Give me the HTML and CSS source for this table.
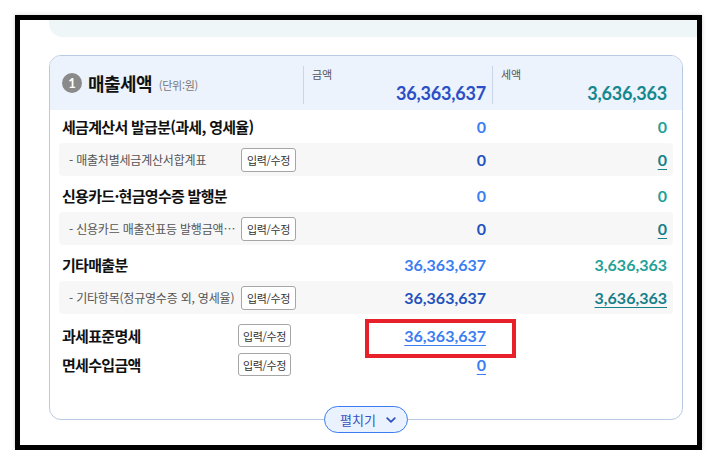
FILE: index.html
```html
<!DOCTYPE html>
<html lang="ko">
<head>
<meta charset="utf-8">
<title>매출세액</title>
<link rel="stylesheet" href="styles.css">
</head>
<body>
<div class="frame">
  <div class="strip"></div>
  <section class="card">
    <header class="card-head">
      <div class="head-title">
        <span class="num-badge">1</span>
        <h2 class="title">매출세액</h2>
        <span class="unit">(단위:원)</span>
      </div>
      <div class="head-col">
        <span class="head-label">금액</span>
        <span class="head-val amt">36,363,637</span>
      </div>
      <div class="head-col">
        <span class="head-label">세액</span>
        <span class="head-val tax">3,636,363</span>
      </div>
    </header>

    <div class="card-body">
      <div class="group first">
        <div class="row main">
          <div class="label">세금계산서 발급분(과세, 영세율)</div>
          <div class="val amt-main">0</div>
          <div class="val tax-main">0</div>
        </div>
        <div class="row sub">
          <div class="label"><span class="sub-text">- 매출처별세금계산서합계표</span><button class="btn">입력/수정</button></div>
          <div class="val amt-sub">0</div>
          <div class="val tax-sub"><a class="link">0</a></div>
        </div>
      </div>

      <div class="group">
        <div class="row main">
          <div class="label">신용카드·현금영수증 발행분</div>
          <div class="val amt-main">0</div>
          <div class="val tax-main">0</div>
        </div>
        <div class="row sub">
          <div class="label"><span class="sub-text">- 신용카드 매출전표등 발행금액…</span><button class="btn">입력/수정</button></div>
          <div class="val amt-sub">0</div>
          <div class="val tax-sub"><a class="link">0</a></div>
        </div>
      </div>

      <div class="group">
        <div class="row main">
          <div class="label">기타매출분</div>
          <div class="val amt-main">36,363,637</div>
          <div class="val tax-main">3,636,363</div>
        </div>
        <div class="row sub">
          <div class="label"><span class="sub-text">- 기타항목(정규영수증 외, 영세율)</span><button class="btn">입력/수정</button></div>
          <div class="val amt-sub">36,363,637</div>
          <div class="val tax-sub"><a class="link">3,636,363</a></div>
        </div>
      </div>

      <div class="row plain first-plain">
        <div class="label"><span class="plain-text">과세표준명세</span><button class="btn small">입력/수정</button></div>
        <div class="val amt-main hl"><a class="link">36,363,637</a><span class="redbox"></span></div>
        <div class="val"></div>
      </div>
      <div class="row plain">
        <div class="label"><span class="plain-text">면세수입금액</span><button class="btn small">입력/수정</button></div>
        <div class="val amt-main"><a class="link">0</a></div>
        <div class="val"></div>
      </div>
    </div>

    <button class="expand">펼치기
      <svg class="chev" width="10" height="6" viewBox="0 0 10 6"><path d="M1.2 1.2 L5 4.8 L8.8 1.2" fill="none" stroke="currentColor" stroke-width="1.8" stroke-linecap="round" stroke-linejoin="round"/></svg>
    </button>
  </section>
</div>
</body>
</html>
```

FILE: styles.css
```css
* { box-sizing: border-box; }

html, body {
  margin: 0;
  padding: 0;
  background: #ffffff;
}

body {
  font-family: "Noto Sans CJK KR", "Noto Sans", sans-serif;
  color: #111;
}

.frame {
  width: 687px;
  height: 435px;
  margin: 15px 0 0 15px;
  border: 5px solid #000;
  background: #fff;
  overflow: hidden;
  box-shadow: 0 0 4px rgba(0, 0, 0, 0.18);
}

.strip {
  height: 17px;
  margin-left: 29px;
  background: #eef6f8;
  border-bottom-left-radius: 14px;
}

.card {
  position: relative;
  margin: 18px 14px 0 29px;
  border: 1px solid #b9c9e2;
  border-radius: 12px;
  background: #fff;
}

.card-head {
  display: grid;
  grid-template-columns: 244px 189px 181px;
  padding: 10px 9px 6px 9px;
  background: #ecf3fd;
  border-radius: 11px 11px 0 0;
}

.head-title {
  display: flex;
  align-items: center;
  padding-left: 3px;
  padding-bottom: 4px;
}

.num-badge {
  width: 20px;
  height: 20px;
  border-radius: 50%;
  background: #8a8a8a;
  color: #fff;
  font-family: "Lato", "Noto Sans", sans-serif;
  font-weight: 700;
  font-size: 13px;
  line-height: 20px;
  text-align: center;
}

.title {
  margin: 0 0 0 6px;
  font-size: 18px;
  font-weight: 700;
  letter-spacing: -0.6px;
  line-height: 24px;
  color: #111;
}

.unit {
  margin-left: 7px;
  margin-top: 3px;
  font-size: 11px;
  color: #777;
  letter-spacing: -0.3px;
}

.head-col {
  display: flex;
  flex-direction: column;
  border-left: 1px solid #c9d5e8;
  padding: 0 6px 0 8px;
  height: 38px;
}

.head-label {
  font-size: 11px;
  line-height: 16px;
  color: #555;
}

.head-val {
  text-align: right;
  font-family: "Lato", "Noto Sans", sans-serif;
  font-weight: 700;
  font-size: 18px;
  line-height: 22px;
  letter-spacing: -0.2px;
}

.head-val.amt { color: #2a4fc6; }
.head-val.tax { color: #14878f; }

.card-body {
  padding: 0 9px 40px 9px;
}

.row {
  display: grid;
  grid-template-columns: 244px 189px 181px;
  align-items: center;
}

.row.main {
  height: 36px;
  padding-top: 2px;
}

.group.first .row.main {
  height: 33px;
  padding-top: 0;
}

.row.sub {
  height: 33px;
  background: #f7f7f7;
  border-radius: 4px;
}

.row.plain { height: 29px; }
.row.first-plain { margin-top: 7px; }

.label {
  display: flex;
  align-items: center;
  min-width: 0;
}

.row.main .label {
  padding-left: 3px;
  font-size: 15px;
  font-weight: 700;
  letter-spacing: -0.7px;
  color: #111;
  white-space: nowrap;
}

.row.sub .label { padding-left: 10px; }

.sub-text {
  width: 168px;
  margin-right: 4px;
  font-size: 12px;
  color: #555;
  letter-spacing: -0.2px;
  white-space: nowrap;
}

.row.plain .label { padding-left: 3px; }

.plain-text {
  width: 176px;
  font-size: 15px;
  font-weight: 700;
  letter-spacing: -0.7px;
  color: #111;
}

.btn {
  height: 24px;
  width: 55px;
  padding: 0;
  border: 1px solid #a6a6a6;
  border-radius: 3px;
  background: #fff;
  font-family: "Noto Sans CJK KR", sans-serif;
  font-size: 11px;
  color: #333;
  letter-spacing: -0.4px;
}

.btn.small {
  width: 53px;
  height: 23px;
}

.val {
  position: relative;
  text-align: right;
  padding-right: 6px;
  font-family: "Lato", "Noto Sans", sans-serif;
  font-weight: 700;
  font-size: 16px;
}

.amt-main { color: #3b7df3; }
.tax-main { color: #1fa197; }
.amt-sub { color: #2351bd; }
.tax-sub { color: #16808a; }

.link {
  color: inherit;
  text-decoration: underline;
  text-underline-offset: 3px;
  text-decoration-thickness: 1px;
}

.redbox {
  position: absolute;
  left: 62px;
  top: -7px;
  width: 151px;
  height: 39px;
  border: 4px solid #e8202a;
}

.expand {
  position: absolute;
  left: 50%;
  bottom: -14px;
  transform: translateX(-50%);
  width: 84px;
  height: 27px;
  display: flex;
  align-items: center;
  justify-content: center;
  gap: 10px;
  border: 1px solid #3b7cf2;
  border-radius: 14px;
  background: #ebf2ff;
  color: #3451be;
  font-family: "Noto Sans CJK KR", sans-serif;
  font-size: 13px;
  padding: 0 0 0 4px;
}

.chev { display: block; margin-top: 1px; }
```
